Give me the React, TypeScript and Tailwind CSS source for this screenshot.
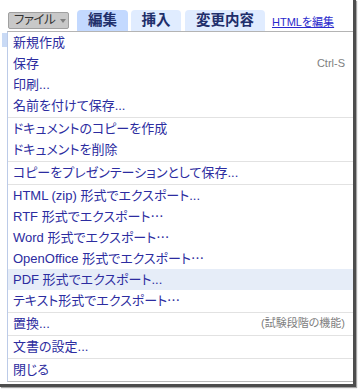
const font = "font-['Liberation_Sans','Noto_Sans_CJK_JP',sans-serif] [font-feature-settings:'palt']";

type Item = { label: string; hint?: string; active?: boolean } | 'sep';

const items: Item[] = [
  { label: '新規作成' },
  { label: '保存', hint: 'Ctrl-S' },
  { label: '印刷...' },
  { label: '名前を付けて保存...' },
  'sep',
  { label: 'ドキュメントのコピーを作成' },
  { label: 'ドキュメントを削除' },
  'sep',
  { label: 'コピーをプレゼンテーションとして保存...' },
  'sep',
  { label: 'HTML (zip) 形式でエクスポート...' },
  { label: 'RTF 形式でエクスポート⋯' },
  { label: 'Word 形式でエクスポート⋯' },
  { label: 'OpenOffice 形式でエクスポート⋯' },
  { label: 'PDF 形式でエクスポート...', active: true },
  { label: 'テキスト形式でエクスポート⋯' },
  'sep',
  { label: '置換...', hint: '(試験段階の機能)' },
  'sep',
  { label: '文書の設定...' },
  'sep',
  { label: '閉じる' },
];

export default function App() {
  return (
    <div className={`w-[358px] h-[391px] bg-white ${font}`}>
      <div className="w-[356px] h-[387px] flex flex-col bg-white border-r-[3px] border-b-[3px] border-[#4d4d4d] shadow-[1px_1px_1px_rgba(0,0,0,0.35)]">
        {/* tab row */}
        <div className="h-[31px] flex items-end pl-[8px] shrink-0">
          <div className="h-[17px] w-[61px] shrink-0 mb-[2px] flex items-center pl-[5px] gap-[5px] bg-[#c8c8c8] border border-[#a0a0a0] rounded-[2px] text-[12.5px] text-[#333] leading-none whitespace-nowrap">
            <span className="shrink-0 tracking-[-0.5px]">ファイル</span>
            <span className="shrink-0 w-0 h-0 border-l-[3px] border-r-[3px] border-t-[4px] border-l-transparent border-r-transparent border-t-[#808080]" />
          </div>
          <div className="ml-[8px] h-[21px] w-[51px] shrink-0 flex items-center justify-center bg-[#c3d9ff] rounded-t-[4px] text-[14.5px] font-bold text-[#1f2f6b] leading-none">
            編集
          </div>
          <div className="ml-[3px] h-[21px] w-[50px] shrink-0 flex items-center justify-center bg-[#e0ecff] rounded-t-[4px] text-[14.5px] font-bold text-[#1f2f6b] leading-none">
            挿入
          </div>
          <div className="ml-[4px] h-[21px] w-[80px] shrink-0 flex items-center justify-center bg-[#e0ecff] rounded-t-[4px] text-[14.5px] font-bold text-[#1f2f6b] leading-none">
            変更内容
          </div>
          <a className="ml-[7px] mb-[3px] text-[11px] leading-none text-[#2a2acc] underline whitespace-nowrap">HTMLを編集</a>
        </div>

        <div className="flex flex-1 min-h-0">
          {/* left gutter */}
          <div className="w-[7px] shrink-0 pt-[2px] pl-[2px]">
            <div className="w-[5px] h-[14px] bg-[#c9daf5]" />
          </div>
          {/* menu */}
          <div className="flex-1 self-start border-t border-[#b4b4b4] border-l border-l-[#bccbe8] border-b border-b-[#b8b8b8] pb-[1px]">
            {items.map((it, i) =>
              it === 'sep' ? (
                <div key={i} className="pt-[1px]">
                  <div className="h-px bg-[#e2e2e2]" />
                </div>
              ) : (
                <div
                  key={i}
                  className={`h-[21px] flex items-center justify-between pl-[5px] pr-[8px] ${it.active ? 'bg-[#e6edf8]' : ''}`}
                >
                  <span className="text-[13px] text-[#2c2ca0] leading-none whitespace-nowrap">{it.label}</span>
                  {it.hint && <span className="text-[11px] text-[#808080] leading-none whitespace-nowrap">{it.hint}</span>}
                </div>
              )
            )}
          </div>
        </div>
      </div>
    </div>
  );
}
